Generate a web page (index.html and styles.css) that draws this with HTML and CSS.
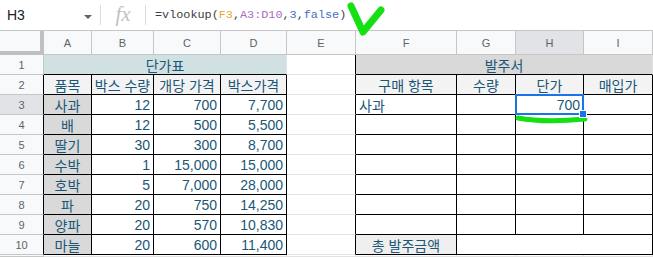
FILE: index.html
```html
<!DOCTYPE html>
<html lang="ko">
<head>
  <meta charset="UTF-8" />
  <title>발주서 - vlookup</title>
  <link rel="stylesheet" href="styles.css">
</head>
<body>
  <!-- FORMULA BAR -->
  <div class="formula-bar">
    <div class="name-box">
      <span>H3</span>
      <span class="caret"></span>
    </div>
    <div class="divider"></div>
    <div class="fx">fx</div>
    <div class="divider"></div>
    <div class="formula">=vlookup(<span class="ref-f">F3</span>,<span class="ref-a">A3:D10</span>,<span class="num">3</span>,<span class="num">false</span>)</div>
  </div>

  <!-- check mark drawn over the sheet -->
  <svg class="check" width="60" height="40" viewBox="0 0 60 40">
    <path d="M11 6 L23 32 L41 10" fill="none" stroke="#14e014" stroke-width="7" stroke-linecap="round" stroke-linejoin="round"/>
  </svg>

  <!-- SHEET -->
  <div class="sheet">
    <!-- column headers -->
    <div class="corner"></div>
    <div class="col-h">A</div>
    <div class="col-h">B</div>
    <div class="col-h">C</div>
    <div class="col-h">D</div>
    <div class="col-h">E</div>
    <div class="col-h">F</div>
    <div class="col-h">G</div>
    <div class="col-h active">H</div>
    <div class="col-h">I</div>

    <!-- row 1 -->
    <div class="row-h">1</div>
    <div class="c title-blue bb span4">단가표</div>
    <div class="c br"></div>
    <div class="c title-gray bb span4">발주서</div>

    <!-- row 2 -->
    <div class="row-h edge">2</div>
    <div class="c bk head">품목</div>
    <div class="c bk head">박스 수량</div>
    <div class="c bk head">개당 가격</div>
    <div class="c bk head">박스가격</div>
    <div class="c br"></div>
    <div class="c bk head">구매 항목</div>
    <div class="c bk head">수량</div>
    <div class="c bk head">단가</div>
    <div class="c bk head">매입가</div>

    <!-- row 3 -->
    <div class="row-h edge active">3</div>
    <div class="c bk item">사과</div>
    <div class="c bk n">12</div>
    <div class="c bk n">700</div>
    <div class="c bk n">7,700</div>
    <div class="c br"></div>
    <div class="c bk left">사과</div>
    <div class="c bk"></div>
    <div class="c bk n selected">700
      <span class="sel-box"></span>
      <span class="sel-handle"></span>
      <svg class="underline" width="74" height="12" viewBox="0 0 74 12">
        <path d="M3 5 Q 30 10 70 6" fill="none" stroke="#14e014" stroke-width="5" stroke-linecap="round"/>
      </svg>
    </div>
    <div class="c bk"></div>

    <!-- row 4 -->
    <div class="row-h edge">4</div>
    <div class="c bk item">배</div>
    <div class="c bk n">12</div>
    <div class="c bk n">500</div>
    <div class="c bk n">5,500</div>
    <div class="c br"></div>
    <div class="c bk"></div>
    <div class="c bk"></div>
    <div class="c bk"></div>
    <div class="c bk"></div>

    <!-- row 5 -->
    <div class="row-h edge">5</div>
    <div class="c bk item">딸기</div>
    <div class="c bk n">30</div>
    <div class="c bk n">300</div>
    <div class="c bk n">8,700</div>
    <div class="c br"></div>
    <div class="c bk"></div>
    <div class="c bk"></div>
    <div class="c bk"></div>
    <div class="c bk"></div>

    <!-- row 6 -->
    <div class="row-h edge">6</div>
    <div class="c bk item">수박</div>
    <div class="c bk n">1</div>
    <div class="c bk n">15,000</div>
    <div class="c bk n">15,000</div>
    <div class="c br"></div>
    <div class="c bk"></div>
    <div class="c bk"></div>
    <div class="c bk"></div>
    <div class="c bk"></div>

    <!-- row 7 -->
    <div class="row-h edge">7</div>
    <div class="c bk item">호박</div>
    <div class="c bk n">5</div>
    <div class="c bk n">7,000</div>
    <div class="c bk n">28,000</div>
    <div class="c br"></div>
    <div class="c bk"></div>
    <div class="c bk"></div>
    <div class="c bk"></div>
    <div class="c bk"></div>

    <!-- row 8 -->
    <div class="row-h edge">8</div>
    <div class="c bk item">파</div>
    <div class="c bk n">20</div>
    <div class="c bk n">750</div>
    <div class="c bk n">14,250</div>
    <div class="c br"></div>
    <div class="c bk"></div>
    <div class="c bk"></div>
    <div class="c bk"></div>
    <div class="c bk"></div>

    <!-- row 9 -->
    <div class="row-h edge">9</div>
    <div class="c bk item">양파</div>
    <div class="c bk n">20</div>
    <div class="c bk n">570</div>
    <div class="c bk n">10,830</div>
    <div class="c br"></div>
    <div class="c bk"></div>
    <div class="c bk"></div>
    <div class="c bk"></div>
    <div class="c bk"></div>

    <!-- row 10 -->
    <div class="row-h edge">10</div>
    <div class="c bk item">마늘</div>
    <div class="c bk n">20</div>
    <div class="c bk n">600</div>
    <div class="c bk n">11,400</div>
    <div class="c br"></div>
    <div class="c bk total">총 발주금액</div>
    <div class="c bk span3"></div>

    <!-- next row, only its top edge shows -->
    <div class="row-h"></div>
    <div class="c"></div>
    <div class="c"></div>
    <div class="c"></div>
    <div class="c"></div>
    <div class="c"></div>
    <div class="c"></div>
    <div class="c"></div>
    <div class="c"></div>
    <div class="c"></div>
  </div>
</body>
</html>
```

FILE: styles.css
```css
:root {
  --grid: #e2e2e3;
  --head-line: #c4c7c5;
  --head-bg: #f8f9fa;
  --active-bg: #e1e3e6;
  --text: #1a5676;
}

body {
  margin: 0;
  width: 653px;
  height: 257px;
  overflow: hidden;
  background: #ffffff;
  font-family: 'Liberation Sans', 'Noto Sans CJK KR', sans-serif;
  position: relative;
}

/* formula bar */
.formula-bar {
  height: 31px;
  display: flex;
  align-items: center;
  border-bottom: 1px solid var(--head-line);
  box-sizing: border-box;
}

.name-box {
  width: 100px;
  display: flex;
  align-items: center;
  justify-content: space-between;
  padding: 0 8px 0 7px;
  box-sizing: border-box;
  font-size: 14px;
  color: #202124;
}

.caret {
  width: 0;
  height: 0;
  border-left: 4px solid transparent;
  border-right: 4px solid transparent;
  border-top: 4px solid #5f6368;
  margin-top: 3px;
}

.divider {
  width: 1px;
  height: 20px;
  background: #dadce0;
}

.fx {
  width: 44px;
  text-align: center;
  font-family: 'Liberation Serif', serif;
  font-style: italic;
  font-size: 21px;
  color: #c2c2c2;
  line-height: 1;
  padding-bottom: 2px;
}

.formula {
  padding-left: 9px;
  font-family: 'Liberation Mono', monospace;
  font-size: 11.8px;
  color: #3c4043;
  padding-bottom: 1px;
}

.ref-f { color: #eca42f; }
.ref-a { color: #a96cc4; }
.num { color: #3f6fc6; }

.check {
  position: absolute;
  left: 340px;
  top: 0;
}

/* sheet grid */
.sheet {
  display: grid;
  grid-template-columns: 44px 48px 62px 67px 66px 69px 101px 59px 68px 1fr;
  grid-template-rows: 24px repeat(10, 20px) 2px;
}

.corner {
  background: var(--head-bg);
  border-right: 4px solid #c0c0c0;
  border-bottom: 4px solid #c0c0c0;
  box-sizing: border-box;
}

.col-h,
.row-h {
  background: var(--head-bg);
  border-right: 1px solid var(--head-line);
  border-bottom: 1px solid var(--head-line);
  box-sizing: border-box;
  display: flex;
  align-items: center;
  justify-content: center;
  font-size: 11px;
  color: #5f6368;
}

.row-h.edge {
  border-right-color: #000;
}

.col-h.active,
.row-h.active {
  background: var(--active-bg);
}

.c {
  border-right: 1px solid var(--grid);
  border-bottom: 1px solid var(--grid);
  box-sizing: border-box;
  display: flex;
  align-items: center;
  padding: 0 3px;
  font-size: 14px;
  color: var(--text);
  white-space: nowrap;
  position: relative;
}

.bk {
  border-right-color: #000;
  border-bottom-color: #000;
}

.br {
  border-right-color: #000;
}

.bb {
  border-bottom-color: #000;
}

.span4 { grid-column: span 4; }
.span3 { grid-column: span 3; }

.title-blue,
.title-gray,
.head,
.item,
.total {
  justify-content: center;
}

.title-blue { background: #d0e0e3; }
.title-gray { background: #d9d9d9; }
.head { background: #f3f3f3; }
.item { background: #d9d9d9; }
.total { background: #efefef; }

.n { justify-content: flex-end; }
.left { justify-content: flex-start; }

/* selected cell H3 */
.sel-box {
  position: absolute;
  left: -1px;
  top: -1px;
  right: -1px;
  bottom: -1px;
  border: 2px solid #1a73e8;
}

.sel-handle {
  position: absolute;
  right: -4px;
  bottom: -4px;
  width: 6px;
  height: 6px;
  background: #1a73e8;
  border: 1px solid #fff;
  z-index: 2;
}

.underline {
  position: absolute;
  left: -1px;
  top: 18px;
  z-index: 1;
}
```
